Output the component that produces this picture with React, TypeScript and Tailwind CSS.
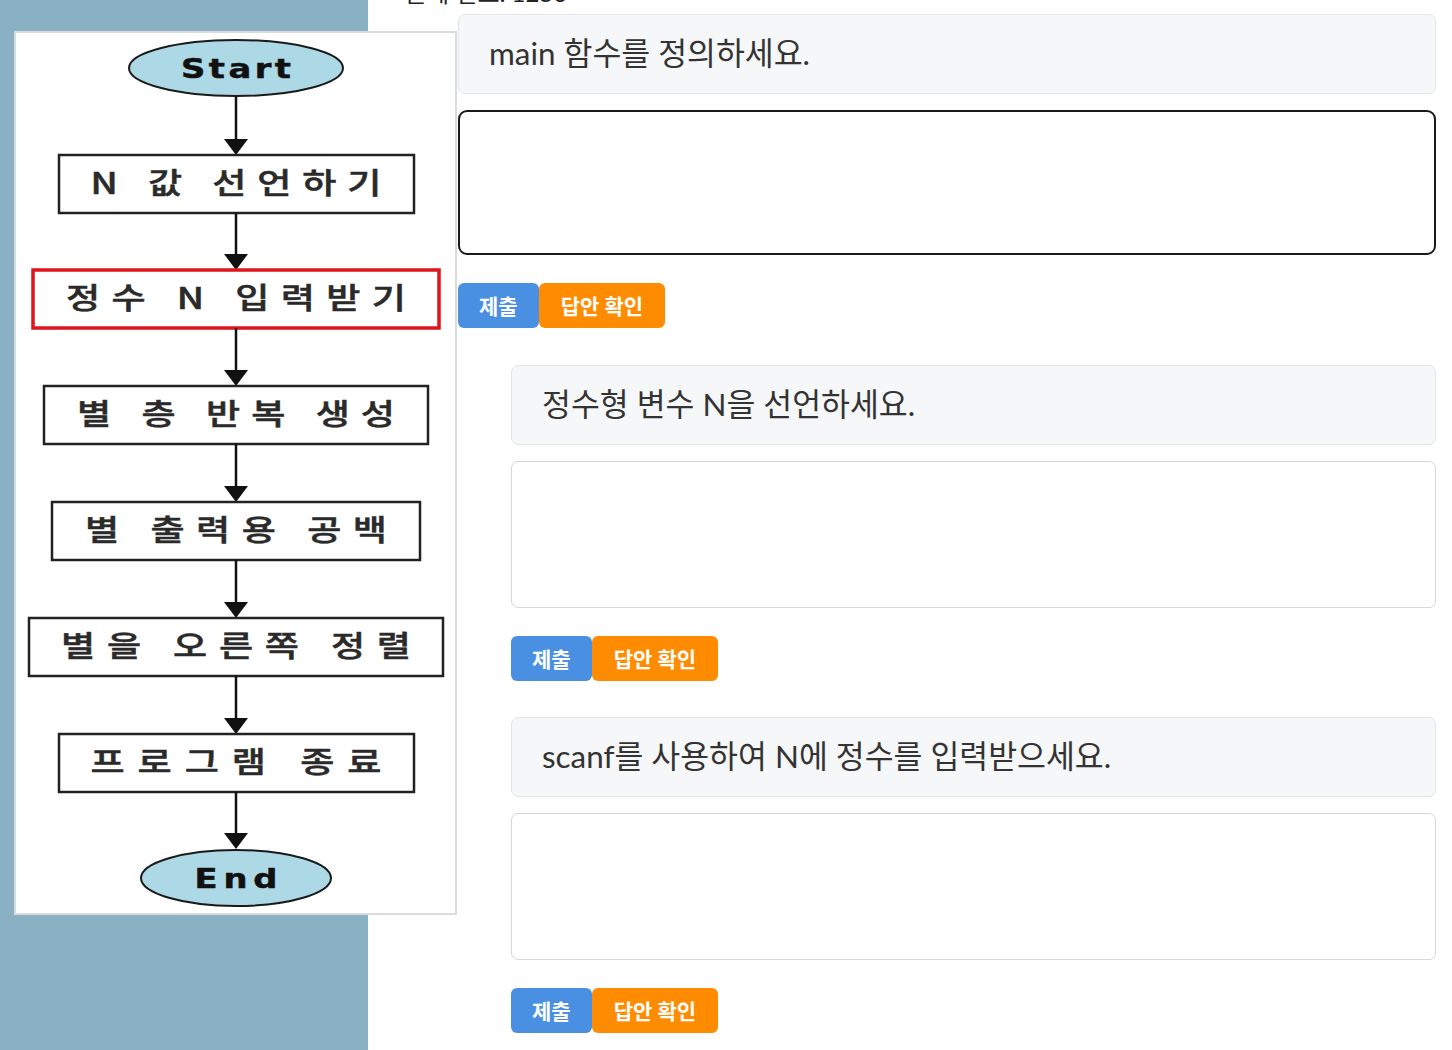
import React from "react";

type Step = { label: string; x: number; y: number; w: number; tw: number; red?: boolean };

const steps: Step[] = [
  { label: "N 값 선언하기", x: 45, y: 124, w: 355, tw: 291 },
  { label: "정수 N 입력받기", x: 19, y: 239, w: 406, tw: 340, red: true },
  { label: "별 층 반복 생성", x: 30, y: 355, w: 384, tw: 318 },
  { label: "별 출력용 공백", x: 38, y: 471, w: 368, tw: 302 },
  { label: "별을 오른쪽 정렬", x: 15, y: 587, w: 414, tw: 350 },
  { label: "프로그램 종료", x: 45, y: 703, w: 355, tw: 291 },
];

const questions = [
  { text: "main 함수를 정의하세요.", focused: true, nested: false },
  { text: "정수형 변수 N을 선언하세요.", focused: false, nested: true },
  { text: "scanf를 사용하여 N에 정수를 입력받으세요.", focused: false, nested: true },
];

const CX = 222;
const BOX_H = 58;

function Arrow({ from, to }: { from: number; to: number }) {
  return (
    <g>
      <line x1={CX} y1={from} x2={CX} y2={to - 14} stroke="#111" strokeWidth={2.5} />
      <polygon points={`${CX - 12},${to - 16} ${CX + 12},${to - 16} ${CX},${to}`} fill="#111" />
    </g>
  );
}

// wide, stretched label like the scanned chart
function WideText({ y, width, children, font, size, weight, fill, sx }: {
  y: number; width: number; children: string; font: string; size: number; weight: number; fill: string; sx: number;
}) {
  return (
    <text
      transform={`translate(${CX} ${y}) scale(${sx} 1)`}
      x={0}
      y={0}
      textAnchor="middle"
      fontFamily={font}
      fontWeight={weight}
      fontSize={size}
      fill={fill}
      stroke={fill}
      strokeWidth={0.5}
      textLength={width / sx}
      lengthAdjust="spacing"
    >
      {children}
    </text>
  );
}

function Flowchart() {
  const kr = "'Noto Sans CJK KR', 'DejaVu Sans', sans-serif";
  const en = "'DejaVu Sans', 'Liberation Sans', sans-serif";
  return (
    <svg width={439} height={880} viewBox="2 2 439 880" className="block">
      <ellipse cx={CX} cy={37} rx={107} ry={28} fill="#add8e6" stroke="#1a1a1a" strokeWidth={2} />
      <WideText y={47} width={110} font={en} size={27} weight={700} fill="#111" sx={1.25}>
        Start
      </WideText>
      <Arrow from={66} to={steps[0].y} />
      {steps.map((s, i) => (
        <g key={s.label}>
          <rect
            x={s.x}
            y={s.y}
            width={s.w}
            height={BOX_H}
            fill="#fff"
            stroke={s.red ? "#e0141b" : "#222"}
            strokeWidth={s.red ? 3.5 : 2.5}
          />
          <WideText y={s.y + BOX_H / 2 + 10} width={s.tw} font={kr} size={29} weight={500} fill="#2a2a2a" sx={1.28}>
            {s.label}
          </WideText>
          <Arrow from={s.y + BOX_H} to={i < steps.length - 1 ? steps[i + 1].y : 818} />
        </g>
      ))}
      <ellipse cx={CX} cy={847} rx={95} ry={28} fill="#add8e6" stroke="#1a1a1a" strokeWidth={2} />
      <WideText y={857} width={83} font={en} size={27} weight={700} fill="#111" sx={1.25}>
        End
      </WideText>
    </svg>
  );
}

function QuestionBlock({ text, focused, nested }: { text: string; focused: boolean; nested: boolean }) {
  return (
    <div className={nested ? "ml-[53px] mb-[36px]" : "mb-[37px]"}>
      <div className="h-[80px] flex items-center px-[30px] bg-[#f6f7f8] border border-[#e3e5e8] rounded-[7px] text-[31.4px] text-[#333]">
        {text}
      </div>
      <textarea
        className={
          focused
            ? "mt-[16px] block w-full h-[145px] rounded-[9px] border-[2.5px] border-[#1a1a1a] bg-white resize-none outline-none"
            : "mt-[16px] block w-full h-[147px] rounded-[7px] border border-[#d3d6da] bg-white resize-none outline-none"
        }
      />
      <div className="mt-[28px] flex">
        <button className="h-[45px] px-[21px] rounded-[6px] bg-[#4a90e2] text-white text-[21px] font-bold">제출</button>
        <button className="h-[45px] px-[22px] rounded-[6px] bg-[#ff8c00] text-white text-[21px] font-bold">답안 확인</button>
      </div>
    </div>
  );
}

export default function App() {
  return (
    <div
      className="flex min-h-screen bg-white overflow-hidden"
      style={{ fontFamily: "Lato, 'Noto Sans CJK KR', sans-serif" }}
    >
      <aside className="w-[368px] shrink-0 bg-[#89b1c3] min-h-[1050px]">
        <div className="relative z-10 mt-[31px] ml-[14px] w-[443px] h-[884px] bg-white border-2 border-[#d9dcdf]">
          <Flowchart />
        </div>
      </aside>
      <main className="flex-1 pl-[37px] pr-[16px]">
        <h2 className="-mt-[22px] text-[24px] leading-[29px] text-[#222]">문제 번호: 1250</h2>
        <div className="mt-[7px] ml-[53px]">
          {questions.map((q) => (
            <QuestionBlock key={q.text} {...q} />
          ))}
        </div>
      </main>
    </div>
  );
}
